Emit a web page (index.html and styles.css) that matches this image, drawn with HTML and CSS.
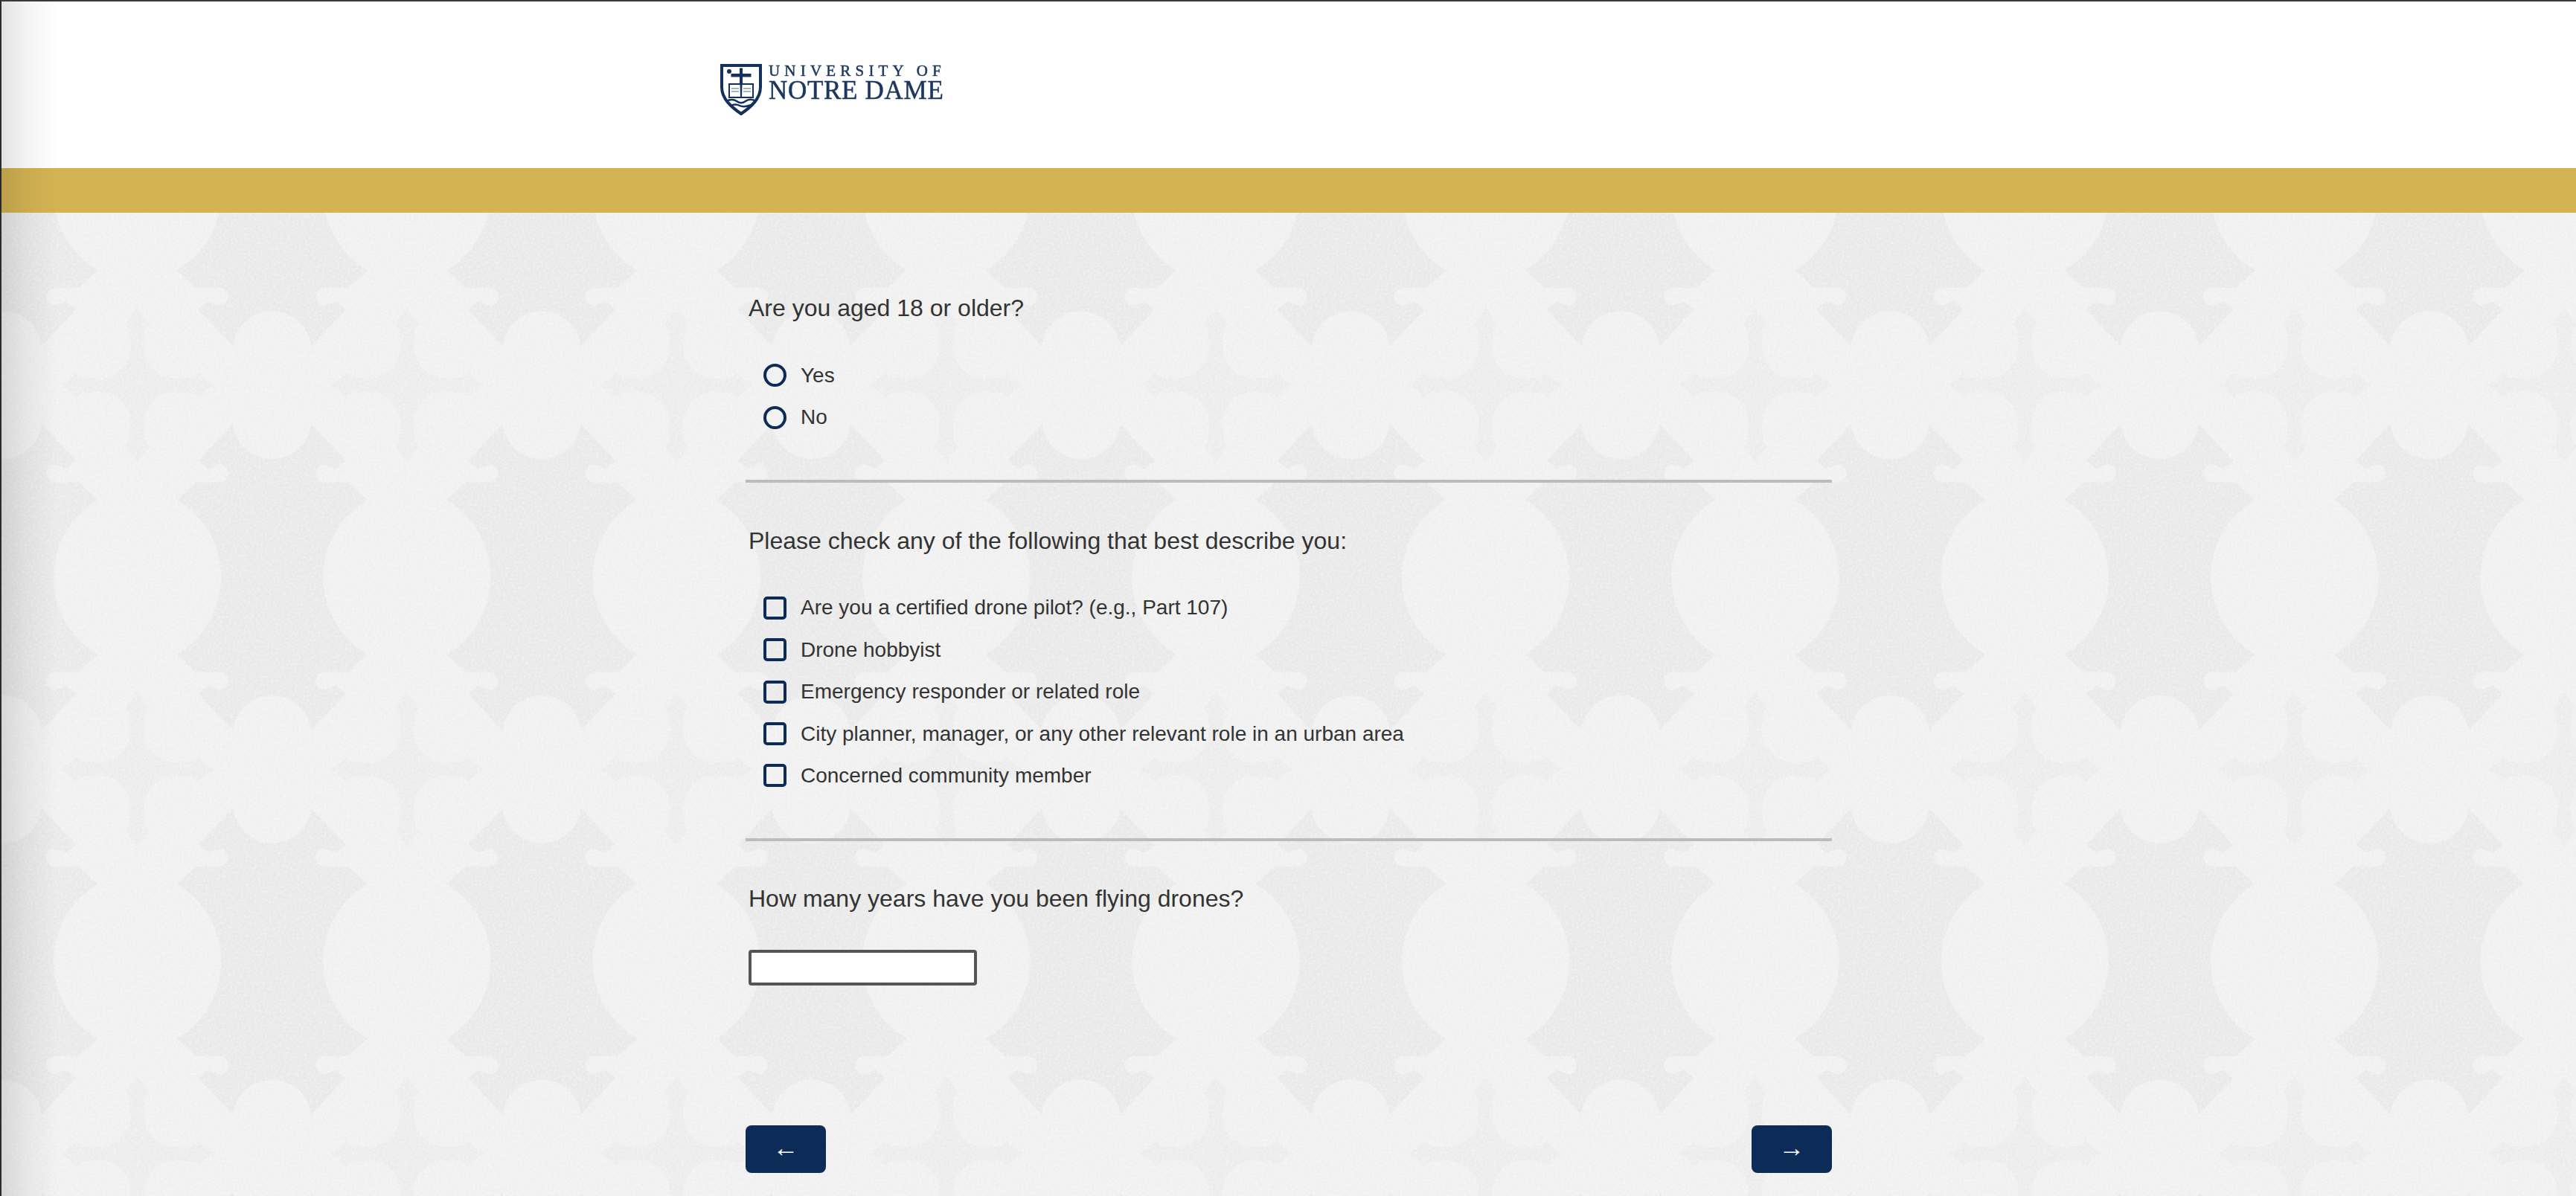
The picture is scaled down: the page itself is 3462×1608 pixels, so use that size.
FILE: index.html
```html
<!DOCTYPE html>
<html lang="en">
<head>
<meta charset="utf-8">
<title>University of Notre Dame survey</title>
<link rel="stylesheet" href="styles.css">
</head>
<body>
<div class="frame">
  <header class="site-header">
    <div class="logo">
      <svg class="shield" viewBox="0 0 56 69" aria-hidden="true">
        <path class="shield-body" d="M2 2H54V31C54 47 41 58 28 67C15 58 2 47 2 31Z"/>
        <path class="navy" d="M26 5.500H30V13H41.500V17.500H30V27H26V17.500H14.500V13H26Z"/>
        <circle class="navy" cx="12" cy="10" r="3"/>
        <path class="book" d="M12 27H27.500L28 45H12ZM44 27H28.500L28 45H44Z"/>
        <path class="book-lines" d="M15 33H25M15 37H25M31 33H41M31 37H41"/>
        <path class="waves" d="M8 50C14 47 18 47 22 50S30 53 34 50S43 47 48 50M14 56C18 54 22 54 26 56S34 58 42 55"/>
      </svg>
      <div class="wordmark">
        <span class="wordmark-top">UNIVERSITY OF</span>
        <span class="wordmark-main">NOTRE DAME</span>
      </div>
    </div>
  </header>
  <div class="gold-bar"></div>
  <main class="content">
    <svg class="pattern-layer" aria-hidden="true">
      <defs>
        <g id="body-shape">
          <path d="M91.500 -359L172.500 -273L149 -254L123 -264A20 20 0 0 0 123 -222.500L178 -222.500L223 -181A210 210 0 0 0 223 181L178 222.500L123 222.500A20 20 0 0 0 123 264L149 254L172.500 273L91.500 359A92 92 0 0 0 -91.500 359L-172.500 273L-149 254L-123 264A20 20 0 0 0 -123 222.500L-178 222.500L-223 181A210 210 0 0 0 -223 -181L-178 -222.500L-123 -222.500A20 20 0 0 0 -123 -264L-149 -254L-172.500 -273L-91.500 -359A92 92 0 0 0 91.500 -359Z"/>
        </g>
        <g id="cross-shape">
          <path d="M0 -182L12 -165L28 -143L18 -130L17 -105A75 75 0 0 0 105 -17L130 -18L143 -29L160 -12L180 0L160 12L143 29L130 18L105 17A75 75 0 0 0 17 105L18 130L28 143L12 165L0 182L-12 165L-28 143L-18 130L-17 105A75 75 0 0 0 -105 17L-130 18L-143 29L-160 12L-180 0L-160 -12L-143 -29L-130 -18L-105 -17A75 75 0 0 0 -17 -105L-18 -130L-28 -143L-12 -165Z"/>
        </g>
        <pattern id="damask" width="362.4" height="516.6" patternUnits="userSpaceOnUse" patternTransform="translate(182.5 231.7)">
          <use href="#body-shape" class="pat-body" transform="translate(181.2 258.3) scale(.574)"/>
          <use href="#cross-shape" class="pat-cross" transform="translate(0 0) scale(.574)"/>
          <use href="#cross-shape" class="pat-cross" transform="translate(362.4 0) scale(.574)"/>
          <use href="#cross-shape" class="pat-cross" transform="translate(0 516.6) scale(.574)"/>
          <use href="#cross-shape" class="pat-cross" transform="translate(362.4 516.6) scale(.574)"/>
        </pattern>
        <filter id="grain" x="0" y="0" width="100%" height="100%">
          <feTurbulence type="fractalNoise" baseFrequency=".35" numOctaves="2" seed="4"/>
          <feColorMatrix values="0 0 0 0 1  0 0 0 0 1  0 0 0 0 1  0 0 0 .9 -.36"/>
        </filter>
      </defs>
      <rect width="100%" height="100%" fill="url(#damask)"/>
      <rect width="100%" height="100%" filter="url(#grain)"/>
    </svg>
    <form class="survey">
      <section class="question">
        <p class="prompt">Are you aged 18 or older?</p>
        <div class="options">
          <label class="option"><input type="radio" name="age"><span>Yes</span></label>
          <label class="option"><input type="radio" name="age"><span>No</span></label>
        </div>
      </section>
      <hr class="divider">
      <section class="question">
        <p class="prompt">Please check any of the following that best describe you:</p>
        <div class="options">
          <label class="option"><input type="checkbox"><span>Are you a certified drone pilot? (e.g., Part 107)</span></label>
          <label class="option"><input type="checkbox"><span>Drone hobbyist</span></label>
          <label class="option"><input type="checkbox"><span>Emergency responder or related role</span></label>
          <label class="option"><input type="checkbox"><span>City planner, manager, or any other relevant role in an urban area</span></label>
          <label class="option"><input type="checkbox"><span>Concerned community member</span></label>
        </div>
      </section>
      <hr class="divider">
      <section class="question">
        <p class="prompt">How many years have you been flying drones?</p>
        <input class="text-input" type="text" aria-label="Years flying drones">
      </section>
      <nav class="nav-buttons">
        <button class="nav-button" type="button">←</button>
        <button class="nav-button" type="button">→</button>
      </nav>
    </form>
  </main>
</div>
</body>
</html>
```

FILE: styles.css
```css
* { box-sizing: border-box; }
html, body { margin: 0; height: 100%; overflow: hidden; }
body { font-family: "Liberation Sans", Arial, sans-serif; color: #333; background: #f0f0f0; }

.frame {
  position: relative;
  height: 1608px;
  border-top: 2px solid #3a3a3a;
  border-left: 2px solid #2a2a2a;
  display: flex;
  flex-direction: column;
}
.frame::after {
  content: "";
  position: absolute;
  inset: 0 auto 0 0;
  width: 76px;
  pointer-events: none;
  background: linear-gradient(to right, rgba(0,0,0,.115), rgba(0,0,0,.05) 40%, rgba(0,0,0,0));
}

.site-header {
  height: 224px;
  flex: none;
  background: #fff;
  padding: 84px 0 0 calc(50% - 764px);
}
.logo { display: flex; gap: 9px; align-items: flex-start; filter: blur(.6px); }
.shield { width: 56px; height: 69px; display: block; }
.shield-body { fill: #fff; stroke: #14305c; stroke-width: 4; }
.navy { fill: #14305c; }
.book { fill: #fff; stroke: #14305c; stroke-width: 2; }
.book-lines { fill: none; stroke: #8b99b0; stroke-width: 1.5; }
.waves { fill: none; stroke: #14305c; stroke-width: 2.5; }

.wordmark { display: flex; flex-direction: column; font-family: "Liberation Serif", serif; color: #1b365f; -webkit-text-stroke: .5px #1b365f; }
.wordmark-top { font-size: 21px; line-height: 18px; letter-spacing: 6.2px; white-space: nowrap; }
.wordmark-main { font-size: 35px; line-height: 32px; letter-spacing: .7px; white-space: nowrap; margin-top: 2px; }

.gold-bar { height: 60px; flex: none; background: #d4b352; }

.content { position: relative; flex: 1; background: #f0f0f0; }
.pattern-layer { position: absolute; inset: 0; width: 100%; height: 100%; }
.pat-body { fill: #e9e9e9; }
.pat-cross { fill: #ececec; }

.survey {
  position: relative;
  width: 1460px;
  margin: 0 auto;
  padding-top: 104px;
  display: flex;
  flex-direction: column;
}
.question { padding-left: 4px; }
.prompt { margin: 0; font-size: 32px; line-height: 48px; }
.options { display: grid; grid-auto-rows: 56.4px; margin-top: 38.6px; padding-left: 20px; }
.option { display: flex; align-items: center; gap: 19px; font-size: 28px; }
.option input {
  appearance: none;
  margin: 0;
  width: 31px;
  height: 31px;
  flex: none;
  background: transparent;
  border: 4.5px solid #0c2b57;
}
.option input[type="radio"] { border-radius: 50%; }
.option input[type="checkbox"] { border-radius: 5px; border-width: 4px; }

.divider { margin: 55.6px 0 53.6px; height: 4px; border: 0; background: #bcbcbc; }

.text-input {
  display: block;
  margin-top: 44.6px;
  width: 307px;
  height: 48px;
  background: #fff;
  border: 4px solid #555;
  border-radius: 4px;
}

.nav-buttons { display: flex; justify-content: space-between; margin-top: 188px; }
.nav-button {
  width: 108px;
  height: 64px;
  padding: 0 0 4px;
  border: 0;
  border-radius: 8px;
  background: #0c2b57;
  color: #fff;
  font-family: "Liberation Sans", Arial, sans-serif;
  font-size: 35px;
  line-height: 60px;
}
```
